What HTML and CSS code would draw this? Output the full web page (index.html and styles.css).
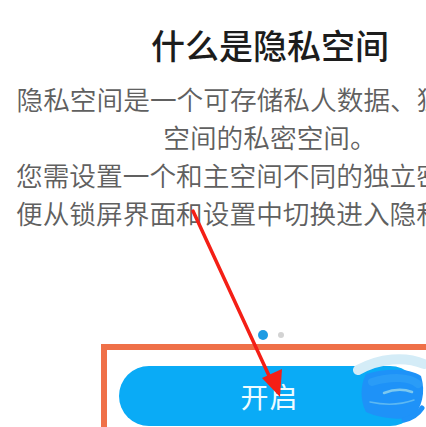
FILE: index.html
```html
<!DOCTYPE html>
<html lang="zh-CN">
<head>
<meta charset="utf-8">
<title>隐私空间</title>
<link rel="stylesheet" href="styles.css">
</head>
<body>
<main class="page">
  <h1 class="title">什么是隐私空间</h1>
  <p class="desc">隐私空间是一个可存储私人数据、独立于主空间的私密空间。</p>
  <p class="desc left">您需设置一个和主空间不同的独立密码，以便从锁屏界面和设置中切换进入隐私空间。</p>
  <div class="dots"><span class="dot active"></span><span class="dot"></span></div>
  <div class="highlight">
    <button class="btn">开启</button>
  </div>
</main>
<svg class="overlay" width="426" height="427" viewBox="0 0 426 427">
  <g class="scribble">
    <path d="M358 370 C 380 358, 405 356, 424 364" stroke="#d4ecf7" stroke-width="10" fill="none" stroke-linecap="round"/>
    <path d="M366 374 C 385 368, 410 368, 421 376 C 426 392, 422 408, 412 418 C 398 420, 378 418, 366 412 C 360 400, 360 386, 366 374 Z" fill="#1e92f8"/>
    <path d="M372 382 C 392 376, 410 377, 418 384" stroke="#2a9cf7" stroke-width="8" fill="none" stroke-linecap="round"/>
    <path d="M384 393 C 394 389, 404 389, 412 392" stroke="#7cc8ef" stroke-width="2.5" fill="none" stroke-linecap="round"/>
    <path d="M370 402 C 384 405, 400 405, 414 400" stroke="#5cb8f2" stroke-width="1.5" fill="none" stroke-linecap="round"/>
    <path d="M404 420 C 412 418, 418 414, 422 408" stroke="#1e92f8" stroke-width="5" fill="none" stroke-linecap="round"/>
  </g>
  <line x1="193" y1="211" x2="271" y2="380" stroke="#f41f16" stroke-width="3.5" stroke-linecap="round"/>
  <polygon points="280,397 262,378 282,369" fill="#f41f16"/>
</svg>
</body>
</html>
```
FILE: styles.css
```css
html, body {
  margin: 0;
  padding: 0;
  background: #ffffff;
}
body {
  width: 426px;
  height: 427px;
  overflow: hidden;
  position: relative;
  font-family: "Noto Sans CJK SC", "Noto Sans", sans-serif;
}
.page {
  margin-left: 16px;
  width: 508px;
  display: flex;
  flex-direction: column;
  align-items: center;
}
.title {
  margin: 23px 0 0;
  font-size: 34px;
  line-height: 44px;
  font-weight: 500;
  color: #1c1c1c;
  white-space: nowrap;
}
.desc {
  margin: 0;
  width: 508px;
  font-size: 26.7px;
  line-height: 38px;
  color: #606060;
  font-weight: 350;
  text-align: center;
}
.title + .desc {
  margin-top: 13px;
}
.desc.left {
  text-align: left;
}
.dots {
  margin-top: 98px;
  height: 10px;
  display: flex;
  align-items: center;
  gap: 10px;
  padding-left: 1px;
}
.dot {
  width: 6px;
  height: 6px;
  border-radius: 50%;
  background: #d3d3d3;
}
.dot.active {
  width: 10px;
  height: 10px;
  background: #1d9be3;
}
.highlight {
  margin-top: 4px;
  width: 326px;
  border: 6px solid #ef7048;
  padding: 16px 0 0 12px;
  height: 120px;
  box-sizing: content-box;
  align-self: flex-start;
  margin-left: 85px;
}
.btn {
  display: block;
  width: 301px;
  height: 60px;
  border: none;
  border-radius: 30px;
  background: #0aabf6;
  color: #eefbff;
  font-family: "Noto Sans CJK SC", "Noto Sans", sans-serif;
  font-size: 28px;
  line-height: 60px;
  padding: 0;
  letter-spacing: 1px;
}
.overlay {
  position: absolute;
  left: 0;
  top: 0;
  pointer-events: none;
}
```
